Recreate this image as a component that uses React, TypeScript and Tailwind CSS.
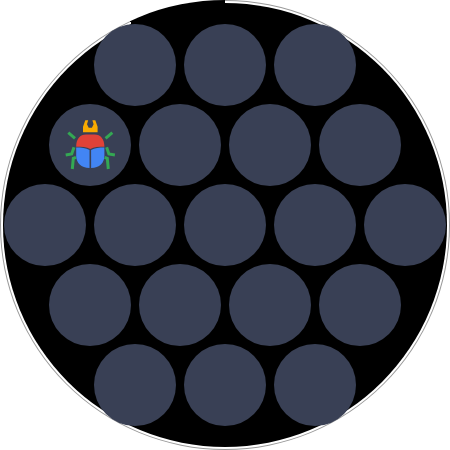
import type { ReactNode } from "react";

const ROWS = [3, 4, 5, 4, 3];

// Coordinates traced from the reference, mirrored around x=27.3
function ScarabIcon() {
  return (
    <svg width="54" height="54" viewBox="0 0 54 54" fill="none">
      <path d="M20 14.3 L20 8.7 L22.3 2.2 L25.2 2.2 L24 6.3 L25.7 9.7 L28.9 9.7 L30.6 6.3 L29.4 2.2 L32.3 2.2 L34.6 8.7 L34.6 14.3 Z" fill="#f9ab00" />
      <path d="M13.2 28.8 C13.2 21 17 16.5 23 16.5 L31.6 16.5 C37.6 16.5 41.4 21 41.4 28.8 C36 28.8 31 29 27.3 31 C23.6 29 18.6 28.8 13.2 28.8 Z" fill="#e04238" />
      <path d="M13.2 29.4 C18.5 29.4 23 29.8 26.5 32 L26.5 50 C18 50 13.2 44.5 13.2 38 Z" fill="#4285f4" />
      <path d="M41.4 29.4 C36.1 29.4 31.6 29.8 28.1 32 L28.1 50 C36.6 50 41.4 44.5 41.4 38 Z" fill="#4285f4" />
      <g stroke="#34a853" strokeWidth="3">
        <path d="M5.3 14.7 L12 20.3" />
        <path d="M49.3 14.7 L42.6 20.3" />
        <path d="M2.7 37 L8.7 36 L11 29.3" />
        <path d="M51.9 37 L45.9 36 L43.6 29.3" />
        <path d="M9.3 51 L10.3 40.3 L13 39.3" />
        <path d="M45.3 51 L44.3 40.3 L41.6 39.3" />
      </g>
    </svg>
  );
}

function Bubble({ children }: { children?: ReactNode }) {
  return (
    <div className="flex h-[82px] w-[82px] items-center justify-center rounded-full bg-[#394055]">
      {children}
    </div>
  );
}

export default function App() {
  return (
    <div className="h-[450px] w-[450px] overflow-hidden bg-white">
      {/* Ring: grey hairline + white gap, with the top-left arc filled black */}
      <div className="h-[450px] w-[450px] rounded-full bg-[conic-gradient(#999999_0deg_335deg,#000000_335deg_360deg)] p-px">
        <div className="h-full w-full rounded-full bg-[conic-gradient(#ffffff_0deg_335deg,#000000_335deg_360deg)] p-[2px]">
          <div className="flex h-full w-full flex-col items-center justify-center space-y-[-2px] rounded-full bg-black">
            {ROWS.map((count, row) => (
              <div key={row} className="flex gap-2">
                {Array.from({ length: count }, (_, col) => (
                  <Bubble key={col}>{row === 1 && col === 0 ? <ScarabIcon /> : null}</Bubble>
                ))}
              </div>
            ))}
          </div>
        </div>
      </div>
    </div>
  );
}
